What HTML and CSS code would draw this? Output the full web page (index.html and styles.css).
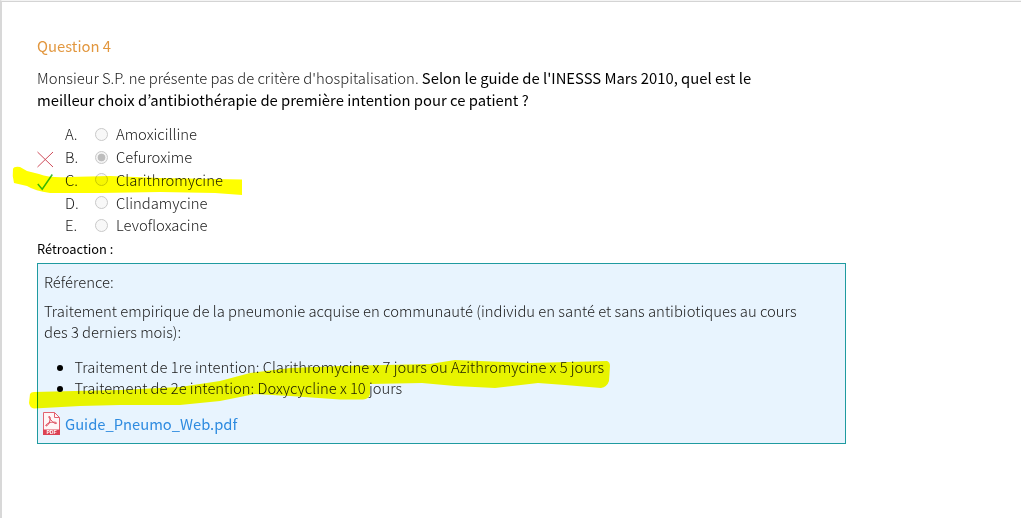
FILE: index.html
```html
<!DOCTYPE html>
<html lang="fr">
<head>
    <meta charset="UTF-8">
    <meta name="viewport" content="width=device-width, initial-scale=1.0">
    <title>Question 4</title>
    <link rel="stylesheet" href="styles.css">
</head>
<body>
    <div class="page">
        <h1>Question 4</h1>
        <p class="question">Monsieur S.P. ne présente pas de critère d'hospitalisation. <strong>Selon le guide de l'INESSS Mars 2010, quel est le<br>meilleur choix d’antibiothérapie de première intention pour ce patient ?</strong></p>
        <div class="answers">
            <div class="answer">
                <span class="mark"></span>
                <span class="letter">A.</span>
                <span class="radio"></span>
                <span class="label">Amoxicilline</span>
            </div>
            <div class="answer">
                <span class="mark"><svg width="17" height="18" viewBox="0 0 17 18"><path d="M.5 4 16 19M16 4 .5 19" stroke="#cf4b5a"/></svg></span>
                <span class="letter">B.</span>
                <span class="radio checked"></span>
                <span class="label">Cefuroxime</span>
            </div>
            <div class="answer">
                <span class="mark"><svg width="17" height="18" viewBox="0 0 17 18"><path d="M.8 13 5.2 18.2 15.3 3.5" fill="none" stroke="#3cb83c" stroke-width="1.5"/></svg></span>
                <span class="letter">C.</span>
                <span class="radio"></span>
                <span class="label">Clarithromycine</span>
            </div>
            <div class="answer">
                <span class="mark"></span>
                <span class="letter">D.</span>
                <span class="radio"></span>
                <span class="label">Clindamycine</span>
            </div>
            <div class="answer">
                <span class="mark"></span>
                <span class="letter">E.</span>
                <span class="radio"></span>
                <span class="label">Levofloxacine</span>
            </div>
        </div>
        <h2>Rétroaction :</h2>
        <div class="feedback">
            <p>Référence:</p>
            <p>Traitement empirique de la pneumonie acquise en communauté (individu en santé et sans antibiotiques au cours<br>des 3 derniers mois):</p>
            <ul>
                <li>Traitement de 1re intention: Clarithromycine x 7 jours ou Azithromycine x 5 jours</li>
                <li>Traitement de 2e intention: Doxycycline x 10 jours</li>
            </ul>
            <a class="file" href="#">
                <svg width="17" height="23" viewBox="0 0 17 23">
                    <path d="M.5.5h11l5 5v17H.5z" fill="#fff5f6" stroke="#e2616f"/>
                    <path d="M11.5.5v5h5" fill="none" stroke="#e2616f"/>
                    <path d="M6 4.5c2 0 1 3 .6 5.5C5.5 12 4 14.5 3 14c-1-1 2-3 4.5-3.5 2.5-.6 6-.5 6 .6 0 1.2-3-.1-4.7-2C7.5 7.5 5 4.7 6 4.5z" fill="none" stroke="#dc4254"/>
                    <path d="M0 17.5h17V23H0z" fill="#dc4254"/>
                    <text class="pdf" x="8.5" y="22" text-anchor="middle">PDF</text>
                </svg>
                <span>Guide_Pneumo_Web.pdf</span>
            </a>
        </div>
    </div>
    <svg class="marker" width="1021" height="518" viewBox="0 0 1021 518">
        <path d="M13 169Q14 166 20 167L27 171 39 174Q50 178 68 177L110 176 160 178 242 179.5V195L215 193 160 192 100 193 50 193Q35 191 27 186L14 183Q12 176 13 169z"/>
        <path d="M30 394Q31 392 34 392L75 391 120 390 180 387 220 381 250 373 290 368 340 366 430 364 455 360 480 361 530 363 607 361Q610 362 610 366L609 381Q607 387 601 388L565 385 538 383 495 388 455 386 422 383 370 384V394Q369 399 363 399.5H340L290 396 255 394 220 401 180 405 120 405 80 406 34 408.5Q30 408 29 403z"/>
    </svg>
</body>
</html>
```
FILE: styles.css
```css
* {
    box-sizing: border-box;
}
body {
    margin: 0;
    height: 518px;
    overflow: hidden;
    background-color: #fff;
    border-top: 1px solid #f4f4f4;
    border-left: 2px solid #d8d8d8;
    font-family: "Noto Sans CJK JP", "Noto Sans", sans-serif;
    font-size: 14.82px;
    font-weight: 300;
    line-height: 22px;
    color: #1a1a1a;
    white-space: nowrap;
}
.page {
    height: 517px;
    border-top: 1px solid #d4d4d4;
    padding: 33px 0 0 35px;
}
h1 {
    margin: 0 0 10px;
    font-size: 14.82px;
    font-weight: 400;
    color: #e2973f;
}
p {
    margin: 0;
}
strong {
    font-weight: 400;
    color: #000;
}
.answers {
    margin-top: 12px;
}
.answer {
    display: flex;
    align-items: center;
    height: 22.75px;
}
.mark {
    width: 28px;
    height: 18px;
}
.mark svg {
    display: block;
    overflow: visible;
}
.letter {
    width: 30px;
}
.radio {
    width: 13px;
    height: 13px;
    margin-right: 8px;
    border: 1px solid #c9c9c9;
    border-radius: 50%;
    background-color: #f8f8f8;
}
.checked {
    background: radial-gradient(circle, #bdbdbd 3.5px, #f4f4f4 4.2px);
}
h2 {
    margin: 0;
    font-size: 12.85px;
    font-weight: 400;
    line-height: 24px;
    color: #000;
}
.feedback {
    width: 809px;
    height: 181px;
    margin-top: 2.25px;
    padding: 7px 6px 0;
    border: 1px solid #1f9ba0;
    background-color: #e8f4fe;
    line-height: 21px;
}
.feedback p {
    margin-bottom: 8px;
}
.feedback ul {
    margin: 14px 0;
    padding-left: 30.5px;
    font-size: 14.78px;
}
.feedback li::marker {
    color: #000;
}
.file {
    display: flex;
    align-items: center;
    gap: 5px;
    margin-left: -1px;
    font-size: 14.75px;
    font-weight: 400;
    color: #2e8be0;
    text-decoration: none;
}
.pdf {
    font: bold 5px "Liberation Sans", sans-serif;
    fill: #fff;
}
.marker {
    position: absolute;
    top: 0;
    left: 0;
    fill: #ff0;
    mix-blend-mode: multiply;
    pointer-events: none;
}
```
